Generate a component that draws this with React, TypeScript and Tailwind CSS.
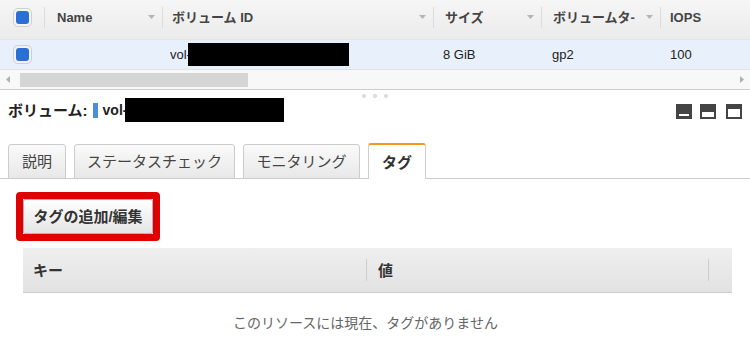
import React from "react";

const FONT = "font-['Liberation_Sans','Noto_Sans_CJK_JP',sans-serif]";

function Checkbox() {
  return (
    <span className="flex h-[19px] w-[19px] items-center justify-center rounded-[5px] border border-[#cfcfcf] bg-[#f4f4f4]">
      <span className="block h-[13px] w-[13px] rounded-[3px] bg-[#2a6fd6]" />
    </span>
  );
}

function SortArrow() {
  return (
    <svg width="7" height="4" viewBox="0 0 7 4" className="shrink-0">
      <path d="M0 0 L7 0 L3.5 4 Z" fill="#b4b4b4" />
    </svg>
  );
}

function HeaderCell({
  label,
  width,
  arrow = true,
  padLeft = "pl-[11px]",
}: {
  label: string;
  width: string;
  arrow?: boolean;
  padLeft?: string;
}) {
  return (
    <div className={`flex h-full items-center ${width}`}>
      <span className="h-[21px] w-px shrink-0 bg-[#dcdcdc]" />
      <span className={`${padLeft} whitespace-nowrap`}>{label}</span>
      {arrow && (
        <span className="ml-auto mr-[7px] flex items-center">
          <SortArrow />
        </span>
      )}
    </div>
  );
}

function PaneIcon({ kind }: { kind: 1 | 2 | 3 }) {
  return (
    <svg width="16" height="15" viewBox="0 0 16 15">
      <rect x="0" y="0" width="16" height="15" fill="#444" />
      {kind === 1 && <rect x="3" y="10" width="10" height="2" fill="#fff" />}
      {kind === 2 && <rect x="2" y="8" width="12" height="5" fill="#fff" />}
      {kind === 3 && <rect x="2" y="5" width="12" height="8" fill="#fff" />}
    </svg>
  );
}

function Tab({
  label,
  width,
  active = false,
}: {
  label: string;
  width: string;
  active?: boolean;
}) {
  if (active) {
    return (
      <div
        className={`-mb-px flex h-[36px] ${width} items-center justify-center rounded-t-[3px] border-x border-t-2 border-x-[#cfcfcf] border-t-[#f7981d] bg-white text-[15px] font-bold text-[#333]`}
      >
        {label}
      </div>
    );
  }
  return (
    <div
      className={`-mb-px flex h-[35px] ${width} items-center justify-center rounded-t-[3px] border border-[#cccccc] bg-gradient-to-b from-[#fafafa] to-[#e8e8e8] text-[15px] text-[#444]`}
    >
      {label}
    </div>
  );
}

export default function App() {
  return (
    <div className={`h-[343px] w-[750px] overflow-hidden bg-white ${FONT} leading-none`}>
      {/* Top table header */}
      <div className="flex h-[40px] items-center border-b border-[#e4e4e4] bg-gradient-to-b from-[#f6f6f6] to-[#ebebeb] pb-[5px] text-[13px] font-bold text-[#444]">
        <div className="flex w-[44px] justify-center">
          <Checkbox />
        </div>
        <HeaderCell label="Name" width="w-[118px]" padLeft="pl-[12px]" />
        <HeaderCell label="ボリューム ID" width="w-[271px]" padLeft="pl-[9px]" />
        <HeaderCell label="サイズ" width="w-[108px]" />
        <HeaderCell label="ボリュームタ-" width="w-[119px]" />
        <HeaderCell label="IOPS" width="flex-1" arrow={false} padLeft="pl-[9px]" />
      </div>

      {/* Data row */}
      <div className="flex h-[30px] items-center border-b border-[#e2e2e2] bg-[#e8f0fb] text-[13px] text-[#222]">
        <div className="flex w-[44px] justify-center">
          <Checkbox />
        </div>
        <div className="w-[118px]" />
        <div className="flex w-[271px] items-center pl-[8px]">
          <span>vol-</span>
          <span className="-ml-[3px] block h-[23px] w-[161px] bg-black" />
        </div>
        <div className="w-[108px] pl-[10px]">8 GiB</div>
        <div className="w-[119px] pl-[11px]">gp2</div>
        <div className="flex-1 pl-[10px]">100</div>
      </div>

      {/* Horizontal scrollbar */}
      <div className="flex h-[20px] items-center border-b border-[#cdcdcd] bg-[#f8f8f8]">
        <svg width="4" height="7" viewBox="0 0 4 7" className="ml-[6px]">
          <path d="M4 0 L0 3.5 L4 7 Z" fill="#b0b0b0" />
        </svg>
        <span className="ml-[10px] block h-[14px] w-[228px] bg-[#d5d5d5]" />
        <svg width="4" height="7" viewBox="0 0 4 7" className="ml-auto mr-[6px]">
          <path d="M0 0 L4 3.5 L0 7 Z" fill="#b0b0b0" />
        </svg>
      </div>

      {/* Splitter handle */}
      <div className="flex h-[8px] items-end justify-center gap-[7px]">
        <span className="block h-[4px] w-[4px] rounded-full border border-[#d0d0d0] bg-[#ececec]" />
        <span className="block h-[4px] w-[4px] rounded-full border border-[#d0d0d0] bg-[#ececec]" />
        <span className="block h-[4px] w-[4px] rounded-full border border-[#d0d0d0] bg-[#ececec]" />
      </div>

      {/* Title row */}
      <div className="flex h-[24px] items-center pl-[8px] pr-[8px]">
        <span className="text-[15px] font-bold text-[#222]">ボリューム:</span>
        <span className="ml-[5px] block h-[15px] w-[5px] bg-[#4a90d9]" />
        <span className="ml-[5px] text-[14px] font-bold text-[#222]">vol-</span>
        <span className="-ml-[2px] block h-[24px] w-[159px] bg-black" />
        <div className="ml-auto flex items-center gap-[8px] pt-[3px]">
          <PaneIcon kind={1} />
          <PaneIcon kind={2} />
          <span className="ml-[2px] flex">
            <PaneIcon kind={3} />
          </span>
        </div>
      </div>

      {/* Tabs */}
      <div className="mt-[21px] flex h-[36px] items-end gap-[8px] border-b border-[#cccccc] pl-[8px]">
        <Tab label="説明" width="w-[58px]" />
        <Tab label="ステータスチェック" width="w-[161px]" />
        <Tab label="モニタリング" width="w-[117px]" />
        <Tab label="タグ" width="w-[58px]" active />
      </div>

      {/* Button with red highlight */}
      <div className="ml-[16px] mt-[13px] inline-flex rounded-[4px] border-[7px] border-[#e00000]">
        <button className="flex h-[35px] w-[130px] items-center justify-center rounded-[2px] border border-[#b4b4b4] bg-gradient-to-b from-[#ffffff] to-[#e4e4e4] text-[15px] font-bold text-[#333]">
          タグの追加/編集
        </button>
      </div>

      {/* Tag table header */}
      <div className="ml-[23px] mt-[7px] flex h-[45px] w-[709px] items-center border-b border-[#cccccc] bg-gradient-to-b from-[#efefef] to-[#e2e2e2] text-[15px] font-bold text-[#333]">
        <div className="w-[343px] pl-[10px]">キー</div>
        <span className="block h-[22px] w-px bg-[#cccccc]" />
        <div className="w-[341px] pl-[11px]">値</div>
        <span className="block h-[22px] w-px bg-[#cccccc]" />
      </div>

      {/* Empty message */}
      <div className="ml-[23px] mt-[23px] w-[685px] text-center text-[14px] text-[#666]">
        このリソースには現在、タグがありません
      </div>
    </div>
  );
}
